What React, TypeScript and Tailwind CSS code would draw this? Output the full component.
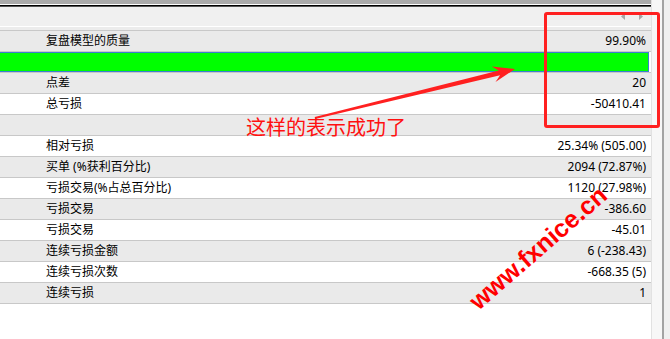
import React from 'react';

type Row = { label?: string; value?: string; tone: 'gray' | 'white' | 'bar' };

const rows: Row[] = [
  { label: '复盘模型的质量', value: '99.90%', tone: 'gray' },
  { tone: 'bar' },
  { label: '点差', value: '20', tone: 'gray' },
  { label: '总亏损', value: '-50410.41', tone: 'white' },
  { tone: 'gray' },
  { label: '相对亏损', value: '25.34% (505.00)', tone: 'white' },
  { label: '买单 (%获利百分比)', value: '2094 (72.87%)', tone: 'gray' },
  { label: '亏损交易(%占总百分比)', value: '1120 (27.98%)', tone: 'white' },
  { label: '亏损交易', value: '-386.60', tone: 'gray' },
  { label: '亏损交易', value: '-45.01', tone: 'white' },
  { label: '连续亏损金额', value: '6 (-238.43)', tone: 'gray' },
  { label: '连续亏损次数', value: '-668.35 (5)', tone: 'white' },
  { label: '连续亏损', value: '1', tone: 'gray' },
];

const font = { fontFamily: '"Noto Sans", "Noto Sans CJK SC", sans-serif' };

const ReportRow: React.FC<{ row: Row }> = ({ row }) => {
  if (row.tone === 'bar') {
    return (
      <div className="h-[21px] border-t border-[#c8c8c8] bg-white pr-[2px]">
        <div className="h-[20px] border-y border-r border-[#3a7fd0] bg-[#00ff00]" />
      </div>
    );
  }
  return (
    <div
      className={`flex h-[21px] items-center justify-between border-t border-[#c8c8c8] pl-[46px] pr-[5px] text-[12px] leading-none text-black ${
        row.tone === 'gray' ? 'bg-[#eaeaea]' : 'bg-white'
      }`}
    >
      <span>{row.label}</span>
      <span>{row.value}</span>
    </div>
  );
};

export default function App() {
  return (
    <div className="relative flex h-[339px] w-[670px] overflow-hidden bg-[#f0f0f0]" style={font}>
      {/* report table */}
      <div className="flex w-[651px] flex-col bg-white">
        <div className="h-[4px] bg-[#ababab]" />
        <div className="h-[1px] bg-white" />
        <div className="h-[1px] bg-black" />
        <div className="h-[1px] bg-[#555]" />
        <div className="flex h-[19px] items-center justify-end gap-[14px] bg-[#f0f0f0] pr-[8px]">
          <svg width="4" height="7" viewBox="0 0 4 7">
            <path d="M4 0 L0 3.5 L4 7 Z" fill="#a8a8a8" />
          </svg>
          <svg width="4" height="7" viewBox="0 0 4 7">
            <path d="M0 0 L4 3.5 L0 7 Z" fill="#a8a8a8" />
          </svg>
        </div>
        <div className="h-[1px] bg-white" />
        <div className="h-[3px] bg-[#ececec]" />
        {rows.map((row, i) => (
          <ReportRow key={i} row={row} />
        ))}
        <div className="border-t border-[#c8c8c8]" />
      </div>

      {/* right frame edge */}
      <div className="w-[11px] border-l border-[#e2e2e2] bg-[#f7f7f7]" />
      <div className="w-[2px] bg-[#a3a3a3]" />
      <div className="flex-1 bg-[#f0f0f0]" />

      {/* annotations */}
      <div className="absolute left-[544px] top-[12px] h-[116px] w-[116px] rounded-[3px] border-[3px] border-[#ff2020]" />
      <svg className="absolute left-0 top-0" width="670" height="339">
        <polygon
          points="314.8,117 498.9,70.4 491.7,66.4 515,69 495.5,82 500.1,75.2 315.2,119"
          fill="#ff2020"
        />
      </svg>
      <div
        className="absolute left-[246px] top-[115px] whitespace-nowrap text-[20px] leading-[24px] text-[#ff1010]"
        style={{ fontFamily: '"Noto Sans CJK SC", sans-serif' }}
      >
        这样的表示成功了
      </div>
      <div
        className="absolute left-[538px] top-[248px] -translate-x-1/2 -translate-y-1/2 -rotate-[41deg] whitespace-nowrap text-[25px] font-bold leading-none text-[#ff0000]"
        style={{ fontFamily: '"Liberation Sans", sans-serif' }}
      >
        www.fxnice.cn
      </div>
    </div>
  );
}
